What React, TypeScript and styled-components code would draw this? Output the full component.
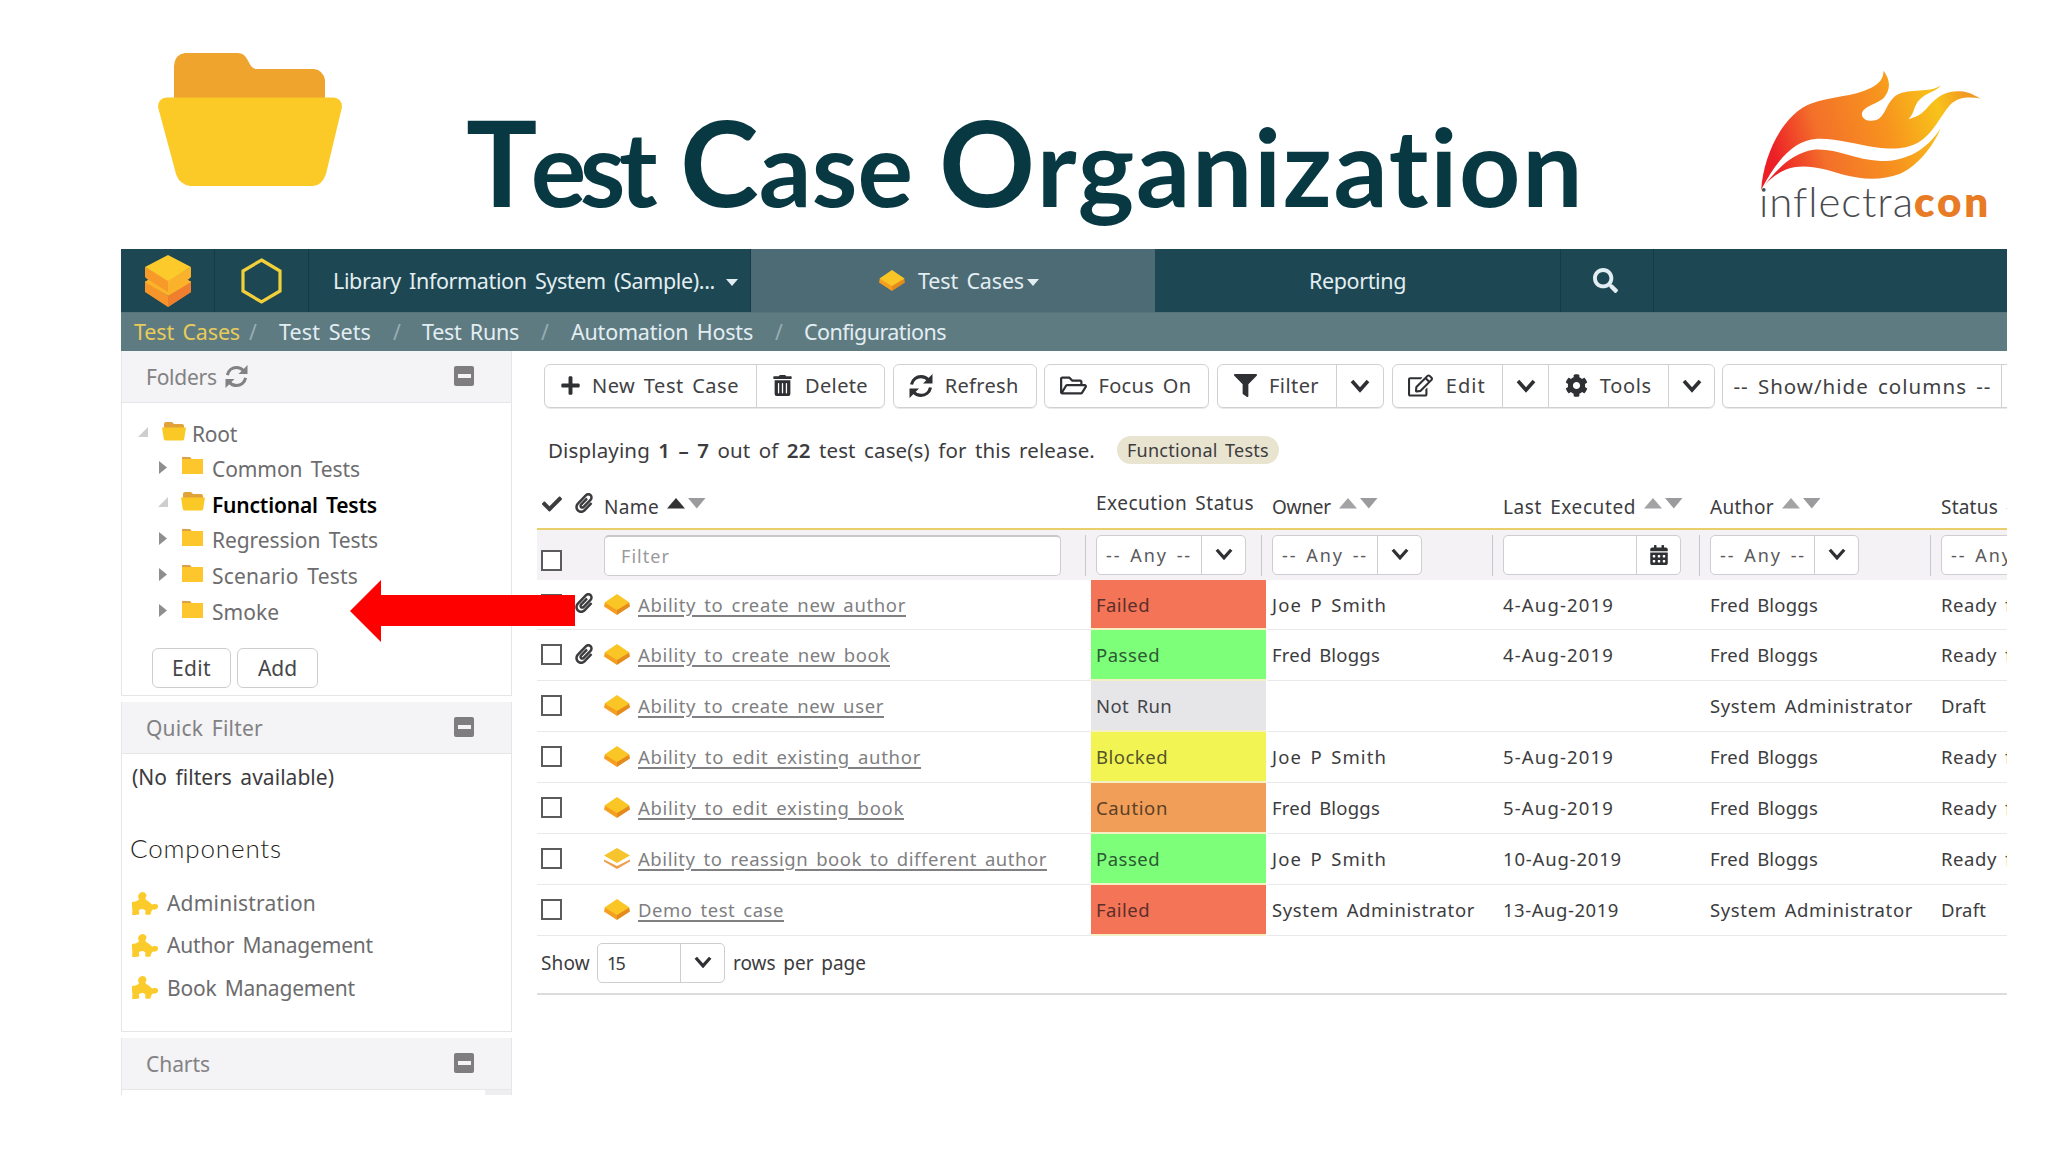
import React, { useLayoutEffect, useRef, useState } from 'react';
import styled, { createGlobalStyle } from 'styled-components';
import {
  FaPlus, FaTrashAlt, FaRegFolderOpen, FaFilter, FaRegEdit, FaCog, FaCheck,
  FaPaperclip, FaCalendarAlt, FaSearch,
} from 'react-icons/fa';

const GlobalStyle = createGlobalStyle`
  * { box-sizing: border-box; }
  body { margin: 0; background: #fff; font-family: "Noto Sans", "Open Sans", sans-serif; color: #3c3c3e; }
`;

/* ---------- text ---------- */

const Label = styled.span<{ $size?: number; $ml?: number; $color?: string; $weight?: number; $underline?: boolean; $font?: string }>`
  display: inline-block;
  flex: none;
  white-space: nowrap;
  word-spacing: 0.14em;
  font-size: ${p => p.$size ?? 18}px;
  margin-left: ${p => p.$ml ?? 0}px;
  font-weight: ${p => p.$weight ?? 400};
  ${p => p.$color && `color: ${p.$color};`}
  ${p => p.$font && `font-family: ${p.$font};`}
  ${p => p.$underline && 'text-decoration: underline; text-decoration-thickness: 1.5px; text-underline-offset: 3px;'}
`;

type TextProps = {
  children: React.ReactNode; w: number; size?: number; ml?: number;
  color?: string; weight?: number; underline?: boolean; font?: string;
};

/* A label whose tracking is adjusted so that it fills the width w. */
function Text({ children, w, size, ml, color, weight, underline, font }: TextProps) {
  const ref = useRef<HTMLSpanElement>(null);
  const [tracking, setTracking] = useState(0);
  useLayoutEffect(() => {
    const el = ref.current;
    if (!el) return;
    const count = (el.textContent || '').length;
    setTracking(t => t + (w - el.getBoundingClientRect().width) / count);
  }, [w]);
  return (
    <Label ref={ref} $size={size} $ml={ml} $color={color} $weight={weight} $underline={underline} $font={font}
      style={{ letterSpacing: `${tracking}px` }}>{children}</Label>
  );
}

/* ---------- page header ---------- */

const Page = styled.div`
  width: 2048px;
  height: 1152px;
  overflow: hidden;
  background: #fff;
`;
const Banner = styled.header`
  display: flex;
  align-items: flex-start;
  height: 249px;
  padding: 0 58px 0 158px;
`;
const BannerFolder = styled.svg`
  flex: none;
  margin-top: 52px;
`;
const Title = styled.h1`
  display: flex;
  margin: 102px 0 0 124px;
  line-height: 120px;
  font-weight: 700;
  color: #083842;
`;
const Initial = styled.span`
  font-size: 119px;
  line-height: 1;
`;
const Brand = styled.div`
  margin: 70px 0 0 auto;
  width: 231px;
  height: 170px;
`;
const BrandName = styled.div`
  display: flex;
  line-height: 40px;
  margin-top: -17px;
`;

/* ---------- application frame ---------- */

const Frame = styled.div`
  width: 1886px;
  height: 846px;
  margin-left: 121px;
  overflow: hidden;
  display: flex;
  flex-direction: column;
`;
const NavBar = styled.nav`
  display: flex;
  flex: none;
  height: 63px;
  background: #1d4753;
  color: #e3eef2;
`;
const NavCell = styled.div<{ $w: number; $pl: number; $active?: boolean }>`
  display: flex;
  flex: none;
  align-items: center;
  width: ${p => p.$w}px;
  padding-left: ${p => p.$pl}px;
  border-right: 1px solid ${p => (p.$active ? '#4d6b74' : '#173b46')};
  background: ${p => (p.$active ? '#4d6b74' : 'transparent')};
`;
const SubNav = styled.nav`
  display: flex;
  flex: none;
  align-items: center;
  height: 39px;
  padding: 0 0 1px 13px;
  background: #5f7b82;
  border-top: 1px solid #56747b;
  color: #e3eef2;
`;
const Caret = styled.span<{ $ml: number }>`
  margin-left: ${p => p.$ml}px;
  margin-top: 3px;
  border: 6px solid transparent;
  border-top: 7px solid currentColor;
  border-bottom: 0;
`;
const Body = styled.div`
  display: flex;
  flex: 1;
  min-height: 0;
`;

/* ---------- sidebar ---------- */

const Sidebar = styled.aside`
  flex: none;
  width: 391px;
  display: flex;
  flex-direction: column;
  gap: 6px;
`;
const Panel = styled.section<{ $h: number }>`
  flex: none;
  height: ${p => p.$h}px;
  border: 1px solid #e6e5e8;
  border-top: 0;
`;
const PanelHead = styled.header`
  display: flex;
  align-items: center;
  height: 52px;
  padding: 0 37px 0 24px;
  background: #f4f3f5;
  border-bottom: 1px solid #e6e5e8;
  color: #828284;
`;
const Collapse = styled.span`
  display: flex;
  align-items: center;
  justify-content: center;
  width: 20px;
  height: 20px;
  margin: 0 0 1px auto;
  border-radius: 2px;
  background: #7f7d7f;
  &::after { content: ''; width: 13px; height: 4px; background: #f4f3f5; }
`;
const Tree = styled.ul`
  list-style: none;
  margin: 0;
  padding: 14px 0 0 16px;
`;
const TreeRow = styled.li<{ $child?: boolean }>`
  display: flex;
  align-items: center;
  height: ${p => (p.$child ? 35.8 : 34)}px;
  padding-left: ${p => (p.$child ? 20 : 0)}px;
  color: #6d6c6e;
`;
const TreeIcon = styled.svg<{ $mt?: number }>`
  flex: none;
  margin-top: ${p => p.$mt ?? -6}px;
`;
const ButtonRow = styled.div`
  display: flex;
  gap: 6px;
  padding: 18px 0 0 30px;
`;
const SmallButton = styled.button<{ $w: number }>`
  display: flex;
  align-items: center;
  justify-content: center;
  width: ${p => p.$w}px;
  height: 40px;
  padding: 0;
  font: inherit;
  color: #47474a;
  background: #fff;
  border: 1px solid #cfcdd2;
  border-radius: 6px;
`;
const FilterNote = styled.div`
  padding: 8px 0 0 10px;
  line-height: 30px;
`;
const GroupTitle = styled.div`
  padding: 38px 0 0 8px;
  line-height: 32px;
`;
const ComponentList = styled.ul`
  list-style: none;
  margin: 14px 0 0;
  padding: 0 0 0 10px;
`;
const ComponentRow = styled.li`
  display: flex;
  align-items: center;
  height: 42.3px;
  color: #6d6c6e;
`;
const ChartStub = styled.div`
  width: 26px;
  height: 5px;
  margin-left: auto;
  background: #eeedf0;
`;

/* ---------- main area ---------- */

const Main = styled.main`
  flex: 1;
  min-width: 0;
  padding-left: 25px;
`;
const Toolbar = styled.div`
  display: flex;
  gap: 7.7px;
  height: 57px;
  padding: 13px 0 0 7px;
  width: 1600px;
`;
const ButtonGroup = styled.div`
  display: flex;
  flex: none;
  height: 44px;
  border: 1px solid #d2d0d5;
  box-shadow: 0 1px 0 #e9e8eb;
  border-radius: 6px;
  color: #414143;
`;
const Tool = styled.div<{ $w: number; $pl: number }>`
  display: flex;
  flex: none;
  align-items: center;
  width: ${p => p.$w}px;
  padding-left: ${p => p.$pl}px;
  padding-bottom: 1px;
  & + & { border-left: 1px solid #d2d0d5; }
  svg { flex: none; color: #2f3033; }
`;
const Summary = styled.div`
  display: flex;
  align-items: center;
  height: 84px;
  padding: 0 0 0 11px;
  b { font-weight: 600; }
`;
const Tag = styled.span`
  display: flex;
  align-items: center;
  justify-content: center;
  width: 162px;
  height: 28px;
  margin-left: 22px;
  border-radius: 14px;
  background: #e9e4d0;
`;
const columns = '67px 487px 176px 231px 207px 231px 260px';
const HeadRow = styled.div`
  display: grid;
  grid-template-columns: ${columns};
  width: 1659px;
  height: 38px;
  align-items: center;
  border-bottom: 2px solid #e9cf6b;
`;
const HeadCell = styled.div<{ $pl?: number }>`
  display: flex;
  align-items: center;
  height: 34px;
  padding-left: ${p => p.$pl ?? 5}px;
  padding-bottom: 7px;
`;
const IconHeadCell = styled(HeadCell)`
  padding-bottom: 13px;
`;
const ExecHeadCell = styled(HeadCell)`
  padding-bottom: 14px;
`;
const SortArrows = styled.svg`
  margin: 0 0 6px 8px;
  flex: none;
`;
const FilterRow = styled.div`
  display: grid;
  grid-template-columns: ${columns};
  width: 1659px;
  height: 50px;
  align-items: center;
  background: #f4f2f5;
`;
const FilterCell = styled.div<{ $pl?: number }>`
  display: flex;
  align-items: center;
  height: 50px;
  padding: 0 5px 0 ${p => p.$pl ?? 5}px;
`;
const Divider = styled.span`
  width: 1px;
  height: 41px;
  margin-left: auto;
  background: #c9c6cc;
`;
const TextBox = styled.div`
  display: flex;
  align-items: center;
  width: 457px;
  height: 41px;
  padding-left: 16px;
  background: #fff;
  border: 1px solid #cfccd2;
  border-top: 2px solid #c9c7cc;
  border-radius: 5px;
`;
const Combo = styled.div<{ $w: number; $ml?: number }>`
  display: flex;
  flex: none;
  width: ${p => p.$w}px;
  height: 40px;
  margin-left: ${p => p.$ml ?? 0}px;
  background: #fff;
  border: 1px solid #cfccd2;
  border-radius: 5px;
`;
const ComboValue = styled.div`
  display: flex;
  flex: 1;
  align-items: center;
  min-width: 0;
  padding: 0 0 0 9px;
`;
const ComboButton = styled.div`
  display: flex;
  align-items: center;
  justify-content: center;
  width: 44px;
  padding-bottom: 1px;
  border-left: 1px solid #cfccd2;
  color: #2f3033;
`;
const Row = styled.div<{ $first?: boolean }>`
  display: grid;
  grid-template-columns: ${columns};
  width: 1659px;
  height: ${p => (p.$first ? 50 : 51)}px;
`;
const Cell = styled.div<{ $pl?: number }>`
  display: flex;
  align-items: center;
  padding: 0 0 1px ${p => p.$pl ?? 5}px;
  border-bottom: 1px solid #e9e8ea;
`;
const StatusCell = styled(Cell)<{ $bg: string }>`
  padding-bottom: 0;
  margin-right: 1px;
  background: ${p => p.$bg};
  border-bottom: 2px solid #f5f0c4;
`;
const CheckBox = styled.span<{ $mt?: number }>`
  flex: none;
  width: 21px;
  height: 21px;
  margin: ${p => p.$mt ?? 0}px 0 0 4px;
  background: #fff;
  border: 2px solid #5b5b5e;
`;
const Pager = styled.div`
  display: flex;
  align-items: center;
  height: 59px;
  padding: 0 0 4px 4px;
  width: 1470px;
  border-bottom: 2px solid #dcdbde;
`;
const ClipIcon = styled(FaPaperclip)`
  margin-left: 12px;
  margin-top: -2px;
`;
const Arrow = styled.svg`
  position: absolute;
  left: 350px;
  top: 580px;
`;

/* ---------- drawings ---------- */

const RefreshIcon = ({ size = 24 }: { size?: number }) => (
  <svg width={size} height={size} viewBox="0 0 24 24" fill="none" stroke="currentColor" strokeWidth="3.200">
    <path d="M2.500 10.500C3.600 5.400 7.600 2.600 12 2.600c3 0 5.600 1.200 7.500 3.500" />
    <path d="M21.500 13.500C20.400 18.600 16.400 21.400 12 21.400c-3 0-5.600-1.200-7.500-3.500" />
    <path d="M23.500 0v9.500h-9.500l3-3 3.500-3.500zM0.500 24v-9.500h9.500l-3 3-3.500 3.500z" fill="currentColor" stroke="none" />
  </svg>
);

const Chevron = ({ size = 20 }: { size?: number }) => (
  <svg width={size} height={size * 0.7} viewBox="0 0 20 14">
    <path d="M2 2l8 9 8-9" fill="none" stroke="#2f3033" strokeWidth="3.600" />
  </svg>
);

const PuzzleIcon = () => (
  <svg width="26" height="23" viewBox="0 0 26 23">
    <path fill="#fbcb2c" d="M0 10Q4 9.500 5.500 8.500Q7.500 8 6.500 6Q5.500 4 7 2Q8.500 0 10.500 0Q13 0 14 2Q15 4 13.500 6Q13 7.500 15 8.500Q17.500 10 19 11.500Q20 13 22 12Q24.500 11.500 25.700 13Q26.500 15 25.300 16.500Q23.500 18 21.500 17.500Q19.700 17.500 19.500 19L18.500 22.500Q15.500 23 13.500 22.500Q13 21 13.500 19.500Q13.500 17.500 10.500 17Q7 17 6.800 19Q7.500 21.500 7 22.500Q3.500 23.200 0 22.700Q.8 18 0 15Q-.4 12 0 10z" />
  </svg>
);

const CubeSvg = styled.svg`
  flex: none;
`;
const Cube = ({ split = false }: { split?: boolean }) => (
  <CubeSvg width="26" height="21" viewBox="0 0 26 21">
    {split ? (
      <>
        <path d="M0 11.500l13 6.500 13-6.500v2L13 21 0 13.500z" fill="#ee9f4d" />
        <path d="M13 0L26 7.500 13 15 0 7.500z" fill="#f6c42c" />
      </>
    ) : (
      <>
        <path d="M1 8l12 6.500V21L0 12.500z" fill="#f59f20" />
        <path d="M25 8l-12 6.500V21l13-8.500z" fill="#e58a1d" />
        <path d="M13 0L25.500 8.500 13 16 .5 8.500z" fill="#fac626" />
      </>
    )}
  </CubeSvg>
);

const FolderSvg = styled(TreeIcon)<{ $ml: number }>`
  margin-left: ${p => p.$ml}px;
`;
const FolderGlyph = ({ open, child }: { open?: boolean; child?: boolean }) => open ? (
  <FolderSvg $ml={child ? 13 : 14} width="24" height="19" viewBox="0 0 24 19">
    <path d="M2 6V2Q2 0 4 0h6l2 2h8q2 0 2 2v3z" fill="#e2a23a" />
    <path d="M0 5.500h24l-1.800 11.500q-.3 1.500-2 1.500H3.800q-1.700 0-2-1.500z" fill="#fbc926" />
  </FolderSvg>
) : (
  <FolderSvg $ml={14} width="21" height="17" viewBox="0 0 21 17">
    <path d="M0 0h8l2 2.500H0z" fill="#dfa04a" />
    <path d="M0 2h21v15H0z" fill="#fdc62d" />
  </FolderSvg>
);

const Expander = ({ open }: { open?: boolean }) => open ? (
  <TreeIcon $mt={-5} width="10" height="10" viewBox="0 0 10 10"><path d="M10 0v10H0z" fill="#cfcdd0" /></TreeIcon>
) : (
  <TreeIcon $mt={-3} width="10" height="13" viewBox="-1 0 10 13"><path d="M0 0l8 6.500L0 13z" fill="#8e8d90" /></TreeIcon>
);

const Sort = ({ up = '#a3a2a5' }: { up?: string }) => (
  <SortArrows width="39" height="11" viewBox="0 0 39 11">
    <path d="M9 0l9 10.500H0z" fill={up} />
    <path d="M21 0h17.500l-8.700 10.500z" fill="#9b9a9d" />
  </SortArrows>
);

/* ---------- data ---------- */

type Item = { name: string; w: number; clip?: boolean; split?: boolean; status: string; owner: string; date: string; author: string; state: string };

const items: Item[] = [
  { name: 'Ability to create new author', w: 268, clip: true, status: 'Failed', owner: 'Joe P Smith', date: '4-Aug-2019', author: 'Fred Bloggs', state: 'Ready for' },
  { name: 'Ability to create new book', w: 252, clip: true, status: 'Passed', owner: 'Fred Bloggs', date: '4-Aug-2019', author: 'Fred Bloggs', state: 'Ready for' },
  { name: 'Ability to create new user', w: 246, status: 'Not Run', owner: '', date: '', author: 'System Administrator', state: 'Draft' },
  { name: 'Ability to edit existing author', w: 283, status: 'Blocked', owner: 'Joe P Smith', date: '5-Aug-2019', author: 'Fred Bloggs', state: 'Ready for' },
  { name: 'Ability to edit existing book', w: 266, status: 'Caution', owner: 'Fred Bloggs', date: '5-Aug-2019', author: 'Fred Bloggs', state: 'Ready for' },
  { name: 'Ability to reassign book to different author', w: 409, split: true, status: 'Passed', owner: 'Joe P Smith', date: '10-Aug-2019', author: 'Fred Bloggs', state: 'Ready for' },
  { name: 'Demo test case', w: 146, status: 'Failed', owner: 'System Administrator', date: '13-Aug-2019', author: 'System Administrator', state: 'Draft' },
];

const statusStyle: Record<string, { bg: string; ink: string; w: number }> = {
  Failed: { bg: '#f47457', ink: '#5b2f2a', w: 54 },
  Passed: { bg: '#7eff7a', ink: '#2c5a33', w: 64 },
  'Not Run': { bg: '#e6e5e8', ink: '#454449', w: 76 },
  Blocked: { bg: '#f1f453', ink: '#55552a', w: 72 },
  Caution: { bg: '#f09e58', ink: '#5c4027', w: 72 },
};

const widths: Record<string, number> = {
  'Joe P Smith': 115, 'Fred Bloggs': 108, 'System Administrator': 203,
  '4-Aug-2019': 111, '5-Aug-2019': 111, '10-Aug-2019': 119, '13-Aug-2019': 116,
  'Ready for': 91, Draft: 45,
};

const folders = [
  { name: 'Common Tests', w: 148 },
  { name: 'Functional Tests', w: 165, open: true },
  { name: 'Regression Tests', w: 166 },
  { name: 'Scenario Tests', w: 146 },
  { name: 'Smoke', w: 67 },
];

const Any = ({ w }: { w: number }) => (
  <Combo $w={w}>
    <ComboValue><Text w={86} size={18} color="#59595c">-- Any --</Text></ComboValue>
    <ComboButton><Chevron size={18} /></ComboButton>
  </Combo>
);

export default function App() {
  return (
    <Page>
      <GlobalStyle />
      <Banner>
        <BannerFolder width="184" height="135" viewBox="0 0 184 135">
          <path d="M16 64V14Q17 2 27 1h53q6 0 9 6l4 7q2 3 6 3h57q9 1 11 11v36z" fill="#efa42d" />
          <path d="M9 45.500H175Q184 46 184 55L168 122Q164 133.500 155 134H32Q21 132 18 122L0 55Q0 46 9 45.500z" fill="#fbca27" />
        </BannerFolder>
        <Title>
          <Text w={185} size={104} weight={700} font="Lato, sans-serif"><Initial>T</Initial>est</Text>
          <Text w={233} ml={29} size={104} weight={700} font="Lato, sans-serif"><Initial>C</Initial>ase</Text>
          <Text w={647} ml={26} size={107} weight={700} font="Lato, sans-serif"><Initial>O</Initial>rganization</Text>
        </Title>
        <Brand>
          <svg width="231" height="123" viewBox="118 60 690 370">
            <defs>
              <linearGradient id="flame" gradientUnits="userSpaceOnUse" x1="130" y1="330" x2="740" y2="150">
                <stop offset="0.05" stopColor="#ec1f27" />
                <stop offset="0.28" stopColor="#f3702a" />
                <stop offset="0.6" stopColor="#f7931e" />
                <stop offset="0.86" stopColor="#f8c31a" />
                <stop offset="1" stopColor="#f29a22" />
              </linearGradient>
            </defs>
            <path fill="url(#flame)" d="M122 420C130 310 190 190 275 160C330 140 400 140 450 115C480 100 490 85 490 62C512 90 512 120 490 145C465 165 425 170 425 195C430 215 455 215 470 210C500 195 495 160 530 135C570 115 630 130 662 107C650 125 620 128 600 148C580 165 585 190 565 208C590 200 605 195 625 170C650 140 680 122 720 124C750 125 765 138 782 146C750 140 715 140 690 165C660 200 640 250 595 278C560 297 520 300 470 293C400 283 350 265 290 267C220 272 170 330 122 420Z" />
            <path fill="url(#flame)" d="M130 410C160 370 210 310 280 300C350 295 400 330 480 334C560 335 620 300 662 235C640 290 590 350 540 372C480 395 420 388 370 375C320 360 270 345 225 352C180 360 150 385 130 410Z" />
          </svg>
          <BrandName>
            <Text w={155} size={42} weight={300} color="#4b4b4f" font="Lato, sans-serif">inflectra</Text>
            <Text w={77} size={42} weight={800} color="#e87b25" font="Lato, sans-serif">con</Text>
          </BrandName>
        </Brand>
      </Banner>

      <Frame>
        <NavBar>
          <NavCell $w={94} $pl={24}>
            <svg width="46" height="52" viewBox="0 0 46 52">
              <path d="M0 26l23 15 23-15v11L23 52 0 37z" fill="#f7952a" />
              <path d="M23 41l23-15v11L23 52z" fill="#ef7f2e" />
              <path d="M0 27l23 14 23-14-4-3-19 12L4 24z" fill="#fbb42a" />
              <path d="M0 12l23 13v12L2 24 0 22z" fill="#f79a2a" />
              <path d="M46 12L23 25v12l21-13 2-2z" fill="#fab12b" />
              <path d="M23 0l23 12-23 14L0 12z" fill="#fccb2b" />
            </svg>
          </NavCell>
          <NavCell $w={94} $pl={26}>
            <svg width="41" height="46" viewBox="0 0 41 46">
              <path d="M20.500 2L39 13v20L20.500 44 2 33V13z" fill="none" stroke="#f2d03a" strokeWidth="3.200" />
            </svg>
          </NavCell>
          <NavCell $w={442} $pl={24}>
            <Text w={382} size={21.5}>Library Information System (Sample)...</Text><Caret $ml={11} />
          </NavCell>
          <NavCell $w={404} $pl={128} $active>
            <Cube /><Text w={106} ml={13} size={21.5}>Test Cases</Text><Caret $ml={3} />
          </NavCell>
          <NavCell $w={406} $pl={154}><Text w={97} size={21.5}>Reporting</Text></NavCell>
          <NavCell $w={93} $pl={32}><FaSearch size={25} /></NavCell>
        </NavBar>
        <SubNav>
          <Text w={106} size={21.5} color="#e8cc5a">Test Cases</Text>
          <Text w={8} ml={9} size={21} color="#98adb2">/</Text>
          <Text w={92} ml={22} size={21.5}>Test Sets</Text>
          <Text w={8} ml={22} size={21} color="#98adb2">/</Text>
          <Text w={97} ml={21} size={21.5}>Test Runs</Text>
          <Text w={8} ml={22} size={21} color="#98adb2">/</Text>
          <Text w={182} ml={22} size={21.5}>Automation Hosts</Text>
          <Text w={8} ml={22} size={21} color="#98adb2">/</Text>
          <Text w={142} ml={21} size={21.5}>Configurations</Text>
        </SubNav>

        <Body>
          <Sidebar>
            <Panel $h={345}>
              <PanelHead>
                <Text w={79} size={21}>Folders&nbsp;</Text>
                <RefreshIcon size={23} />
                <Collapse />
              </PanelHead>
              <Tree>
                <TreeRow><Expander open /><FolderGlyph open /><Text w={45} ml={6} size={21}>Root</Text></TreeRow>
                {folders.map(f => (
                  <TreeRow key={f.name} $child>
                    <Expander open={f.open} />
                    <FolderGlyph open={f.open} child />
                    <Text w={f.w} ml={f.open ? 7 : 9} size={21} weight={f.open ? 600 : 400} color={f.open ? '#000' : undefined}>{f.name}</Text>
                  </TreeRow>
                ))}
              </Tree>
              <ButtonRow>
                <SmallButton $w={79}><Text w={39} size={21}>Edit</Text></SmallButton>
                <SmallButton $w={81}><Text w={39} size={21}>Add</Text></SmallButton>
              </ButtonRow>
            </Panel>
            <Panel $h={330}>
              <PanelHead><Text w={117} size={21}>Quick Filter</Text><Collapse /></PanelHead>
              <FilterNote><Text w={202} size={21}>(No filters available)</Text></FilterNote>
              <GroupTitle><Text w={152} size={26} weight={300} color="#1f1f22" font="Lato, sans-serif">Components</Text></GroupTitle>
              <ComponentList>
                {([['Administration', 149], ['Author Management', 206], ['Book Management', 188]] as [string, number][]).map(([n, w]) => (
                  <ComponentRow key={n}>
                    <PuzzleIcon />
                    <Text w={w} ml={9} size={21}>{n}</Text>
                  </ComponentRow>
                ))}
              </ComponentList>
            </Panel>
            <Panel $h={60}>
              <PanelHead><Text w={64} size={21}>Charts</Text><Collapse /></PanelHead>
              <ChartStub />
            </Panel>
          </Sidebar>

          <Main>
            <Toolbar>
              <ButtonGroup>
                <Tool $w={211} $pl={15}><FaPlus size={21} /><Text w={147} ml={11} size={20}>New Test Case</Text></Tool>
                <Tool $w={128} $pl={15}><FaTrashAlt size={21} /><Text w={63} ml={12} size={20}>Delete</Text></Tool>
              </ButtonGroup>
              <ButtonGroup>
                <Tool $w={142} $pl={15}><RefreshIcon size={24} /><Text w={74} ml={12} size={20}>Refresh</Text></Tool>
              </ButtonGroup>
              <ButtonGroup>
                <Tool $w={163} $pl={15}><FaRegFolderOpen size={27} /><Text w={93} ml={11} size={20}>Focus On</Text></Tool>
              </ButtonGroup>
              <ButtonGroup>
                <Tool $w={118} $pl={16}><FaFilter size={23} /><Text w={50} ml={12} size={20}>Filter</Text></Tool>
                <Tool $w={47} $pl={13}><Chevron /></Tool>
              </ButtonGroup>
              <ButtonGroup>
                <Tool $w={109} $pl={15}><FaRegEdit size={25} /><Text w={40} ml={13} size={20}>Edit</Text></Tool>
                <Tool $w={46} $pl={13}><Chevron /></Tool>
                <Tool $w={120} $pl={16}><FaCog size={23} /><Text w={52} ml={12} size={20}>Tools</Text></Tool>
                <Tool $w={46} $pl={13}><Chevron /></Tool>
              </ButtonGroup>
              <ButtonGroup>
                <Tool $w={278} $pl={10}><Text w={258} size={20.5}>-- Show/hide columns --</Text></Tool>
                <Tool $w={46} $pl={13}><Chevron /></Tool>
              </ButtonGroup>
            </Toolbar>

            <Summary>
              <Text w={547} size={20.5}>Displaying <b>1 – 7</b> out of <b>22</b> test case(s) for this release.</Text>
              <Tag><Text w={142} size={18}>Functional Tests</Text></Tag>
            </Summary>

            <HeadRow>
              <IconHeadCell><FaCheck size={20} /><ClipIcon size={20} /></IconHeadCell>
              <HeadCell $pl={0}><Text w={55} size={19}>Name</Text><Sort up="#333335" /></HeadCell>
              <ExecHeadCell><Text w={158} size={19}>Execution Status</Text></ExecHeadCell>
              <HeadCell><Text w={59} size={19}>Owner</Text><Sort /></HeadCell>
              <HeadCell><Text w={133} size={19}>Last Executed</Text><Sort /></HeadCell>
              <HeadCell><Text w={64} size={19}>Author</Text><Sort /></HeadCell>
              <HeadCell><Text w={57} size={19}>Status</Text><Sort /></HeadCell>
            </HeadRow>

            <FilterRow>
              <FilterCell $pl={0}><CheckBox $mt={11} /></FilterCell>
              <FilterCell $pl={0}>
                <TextBox><Text w={49} size={18} color="#9a999c">Filter</Text></TextBox>
                <Divider />
              </FilterCell>
              <FilterCell><Any w={150} /><Divider /></FilterCell>
              <FilterCell><Any w={150} /><Divider /></FilterCell>
              <FilterCell>
                <Combo $w={178}><ComboValue /><ComboButton><FaCalendarAlt size={20} /></ComboButton></Combo>
                <Divider />
              </FilterCell>
              <FilterCell><Any w={149} /><Divider /></FilterCell>
              <FilterCell><Any w={150} /></FilterCell>
            </FilterRow>

            {items.map((it, i) => {
              const s = statusStyle[it.status];
              return (
                <Row key={it.name} $first={i === 0}>
                  <Cell $pl={0}><CheckBox />{it.clip && <ClipIcon size={20} />}</Cell>
                  <Cell $pl={0}><Cube split={it.split} /><Text w={it.w} ml={8} size={18.5} color="#807f82" underline>{it.name}</Text></Cell>
                  <StatusCell $bg={s.bg}><Text w={s.w} size={18.5} color={s.ink}>{it.status}</Text></StatusCell>
                  <Cell>{it.owner && <Text w={widths[it.owner]} size={18.5}>{it.owner}</Text>}</Cell>
                  <Cell>{it.date && <Text w={widths[it.date]} size={18.5}>{it.date}</Text>}</Cell>
                  <Cell><Text w={widths[it.author]} size={18.5}>{it.author}</Text></Cell>
                  <Cell><Text w={widths[it.state]} size={18.5}>{it.state}</Text></Cell>
                </Row>
              );
            })}

            <Pager>
              <Text w={49} size={19}>Show</Text>
              <Combo $w={128} $ml={7}>
                <ComboValue><Text w={17} size={18}>15</Text></ComboValue>
                <ComboButton><Chevron size={18} /></ComboButton>
              </Combo>
              <Text w={133} ml={8} size={19}>rows per page</Text>
            </Pager>
          </Main>
        </Body>
      </Frame>

      <Arrow width="226" height="62" viewBox="0 0 226 62">
        <path d="M0 31L31 0v15h194v31H31v16z" fill="#fe0000" />
      </Arrow>
    </Page>
  );
}
